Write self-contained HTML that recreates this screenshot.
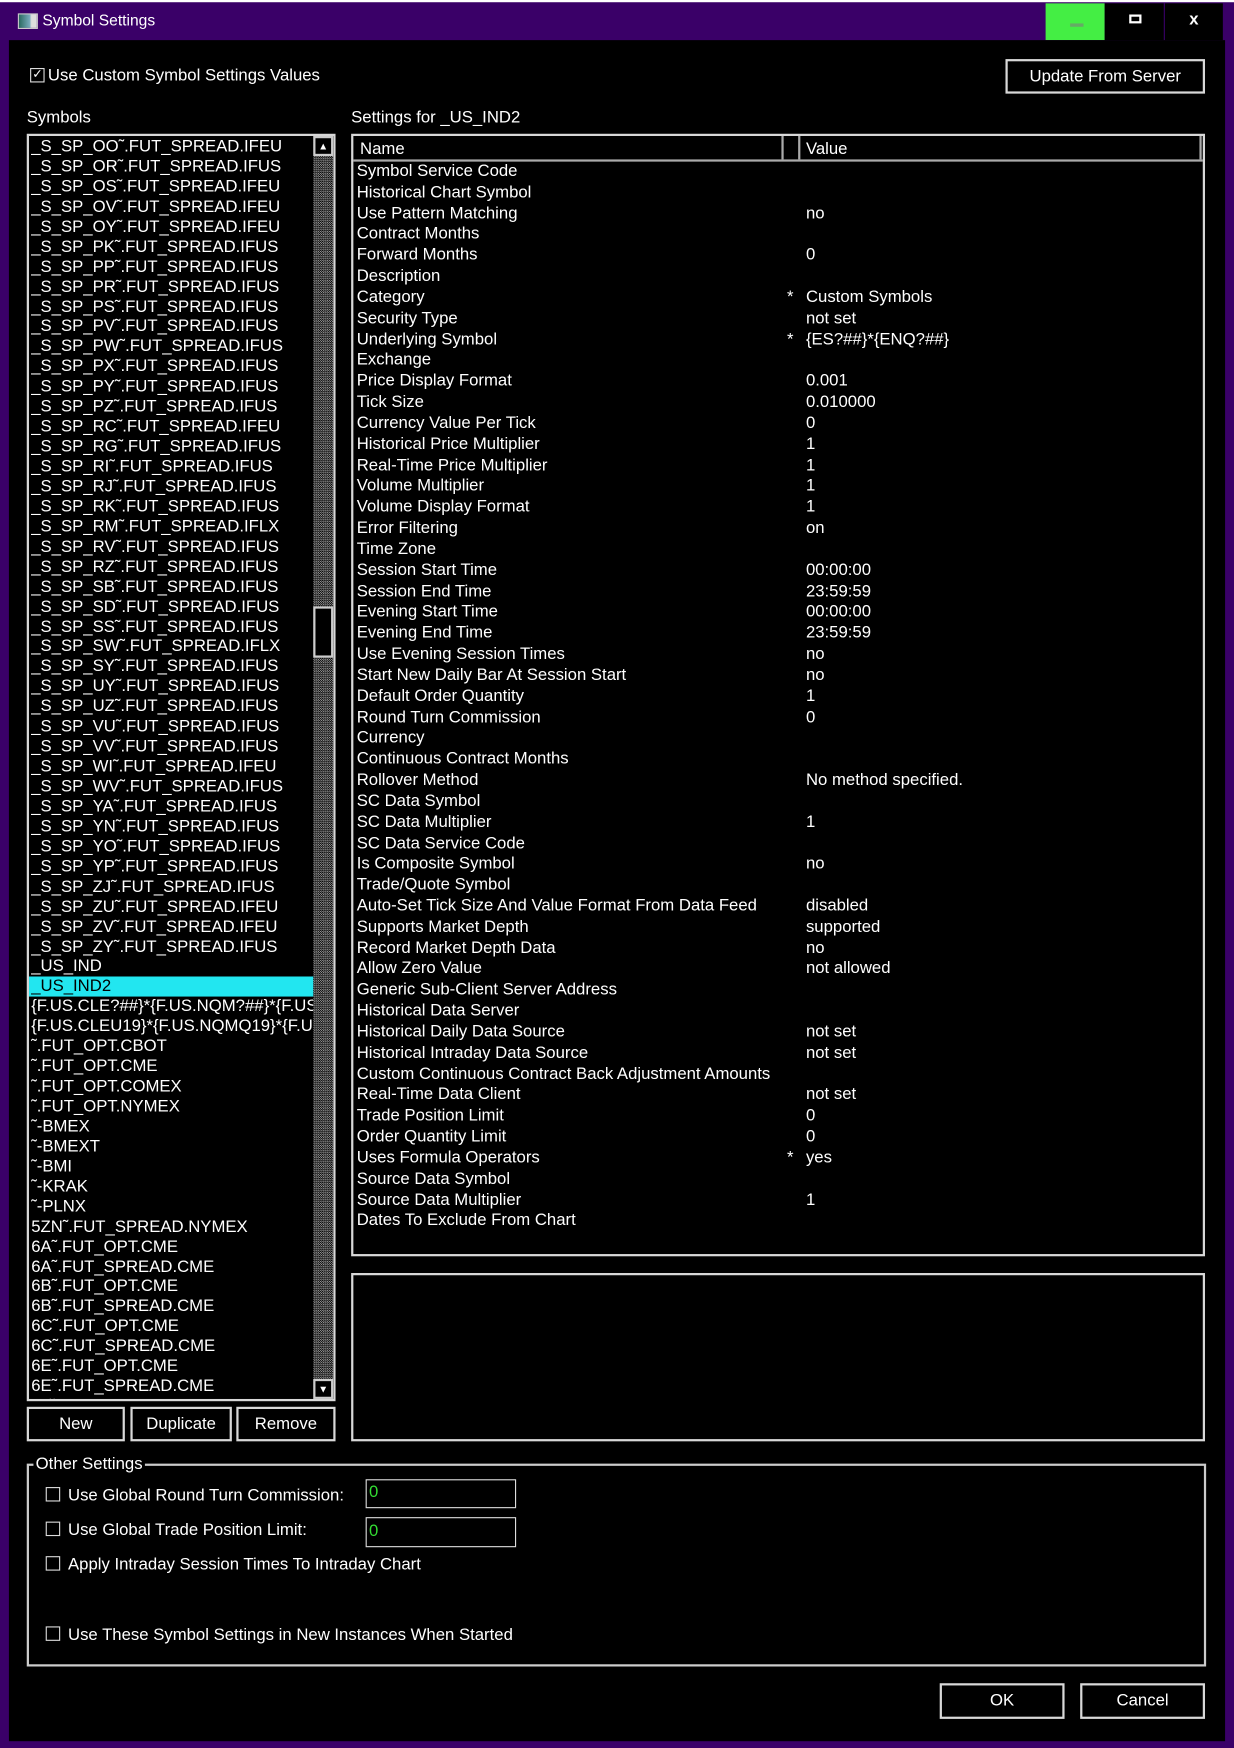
<!DOCTYPE html>
<html><head><meta charset="utf-8"><style>
html,body{margin:0;padding:0;background:#3a0068;overflow:hidden;width:1234px;height:1748px}
#w{position:absolute;left:0;top:0;width:1107px;height:1568px;transform:scale(1.11472);transform-origin:0 0;background:#3a0068;font-family:"Liberation Sans",sans-serif;font-size:15px;color:#fff}
.a{position:absolute}
.box{position:absolute;border:2px solid #d8d8d8;box-sizing:border-box}
.btn{position:absolute;border:2px solid #d8d8d8;box-sizing:border-box;text-align:center;background:#000}
.cb{position:absolute;width:11px;height:11px;border:1px solid #ddd}
.list div{height:17.95px;line-height:17.95px;padding-left:2px;white-space:nowrap}
.tbl div{height:18.84px;line-height:18.84px;white-space:nowrap;position:relative}
.tbl span{position:absolute;left:403px}
.tbl i{position:absolute;left:386px;font-style:normal}
</style></head><body><div id="w">
<div class="a" style="left:0;top:0;width:1107px;height:2px;background:#fff"></div>
<div class="a" style="left:16px;top:12px;width:16px;height:12px;background:linear-gradient(90deg,#2a6a60,#7ab 60%,#ddd 70%);border:1px solid #ccc"></div>
<div class="a" style="left:38px;top:10px;font-size:14px">Symbol Settings</div>
<div class="a" style="left:938px;top:3px;width:53px;height:33px;background:#44ee44"><div class="a" style="left:22px;top:18px;width:12px;height:3px;background:#6a6"></div></div>
<div class="a" style="left:991px;top:3px;width:53px;height:33px;background:#000"><div class="a" style="left:22px;top:10px;width:7px;height:4px;border:2px solid #fff"></div></div>
<div class="a" style="left:1045px;top:3px;width:52px;height:33px;background:#000;text-align:center;line-height:30px;font-weight:bold;font-size:15px">x</div>
<div class="a" style="left:8px;top:36px;width:1091px;height:1526px;background:#000"></div>

<div class="cb" style="left:27px;top:61px;font-size:11px;line-height:11px;text-align:center">✓</div>
<div class="a" style="left:43px;top:59px">Use Custom Symbol Settings Values</div>
<div class="btn" style="left:902px;top:53px;width:179px;height:31px;line-height:27px">Update From Server</div>

<div class="a" style="left:24px;top:97px">Symbols</div>
<div class="box" style="left:24px;top:120px;width:277px;height:1137px;overflow:hidden">
<div class="list" style="position:absolute;left:0;top:1px;width:257px">
<div>_S_SP_OO˜.FUT_SPREAD.IFEU</div><div>_S_SP_OR˜.FUT_SPREAD.IFUS</div><div>_S_SP_OS˜.FUT_SPREAD.IFEU</div><div>_S_SP_OV˜.FUT_SPREAD.IFEU</div><div>_S_SP_OY˜.FUT_SPREAD.IFEU</div><div>_S_SP_PK˜.FUT_SPREAD.IFUS</div><div>_S_SP_PP˜.FUT_SPREAD.IFUS</div><div>_S_SP_PR˜.FUT_SPREAD.IFUS</div><div>_S_SP_PS˜.FUT_SPREAD.IFUS</div><div>_S_SP_PV˜.FUT_SPREAD.IFUS</div><div>_S_SP_PW˜.FUT_SPREAD.IFUS</div><div>_S_SP_PX˜.FUT_SPREAD.IFUS</div><div>_S_SP_PY˜.FUT_SPREAD.IFUS</div><div>_S_SP_PZ˜.FUT_SPREAD.IFUS</div><div>_S_SP_RC˜.FUT_SPREAD.IFEU</div><div>_S_SP_RG˜.FUT_SPREAD.IFUS</div><div>_S_SP_RI˜.FUT_SPREAD.IFUS</div><div>_S_SP_RJ˜.FUT_SPREAD.IFUS</div><div>_S_SP_RK˜.FUT_SPREAD.IFUS</div><div>_S_SP_RM˜.FUT_SPREAD.IFLX</div><div>_S_SP_RV˜.FUT_SPREAD.IFUS</div><div>_S_SP_RZ˜.FUT_SPREAD.IFUS</div><div>_S_SP_SB˜.FUT_SPREAD.IFUS</div><div>_S_SP_SD˜.FUT_SPREAD.IFUS</div><div>_S_SP_SS˜.FUT_SPREAD.IFUS</div><div>_S_SP_SW˜.FUT_SPREAD.IFLX</div><div>_S_SP_SY˜.FUT_SPREAD.IFUS</div><div>_S_SP_UY˜.FUT_SPREAD.IFUS</div><div>_S_SP_UZ˜.FUT_SPREAD.IFUS</div><div>_S_SP_VU˜.FUT_SPREAD.IFUS</div><div>_S_SP_VV˜.FUT_SPREAD.IFUS</div><div>_S_SP_WI˜.FUT_SPREAD.IFEU</div><div>_S_SP_WV˜.FUT_SPREAD.IFUS</div><div>_S_SP_YA˜.FUT_SPREAD.IFUS</div><div>_S_SP_YN˜.FUT_SPREAD.IFUS</div><div>_S_SP_YO˜.FUT_SPREAD.IFUS</div><div>_S_SP_YP˜.FUT_SPREAD.IFUS</div><div>_S_SP_ZJ˜.FUT_SPREAD.IFUS</div><div>_S_SP_ZU˜.FUT_SPREAD.IFEU</div><div>_S_SP_ZV˜.FUT_SPREAD.IFEU</div><div>_S_SP_ZY˜.FUT_SPREAD.IFUS</div><div>_US_IND</div><div style="background:#22e6f0;color:#000">_US_IND2</div><div>{F.US.CLE?##}*{F.US.NQM?##}*{F.US</div><div>{F.US.CLEU19}*{F.US.NQMQ19}*{F.U</div><div>˜.FUT_OPT.CBOT</div><div>˜.FUT_OPT.CME</div><div>˜.FUT_OPT.COMEX</div><div>˜.FUT_OPT.NYMEX</div><div>˜-BMEX</div><div>˜-BMEXT</div><div>˜-BMI</div><div>˜-KRAK</div><div>˜-PLNX</div><div>5ZN˜.FUT_SPREAD.NYMEX</div><div>6A˜.FUT_OPT.CME</div><div>6A˜.FUT_SPREAD.CME</div><div>6B˜.FUT_OPT.CME</div><div>6B˜.FUT_SPREAD.CME</div><div>6C˜.FUT_OPT.CME</div><div>6C˜.FUT_SPREAD.CME</div><div>6E˜.FUT_OPT.CME</div><div>6E˜.FUT_SPREAD.CME</div><div>6J˜.FUT_SPREAD.CME</div>
</div>
<div class="a" style="left:255px;top:0;width:18px;height:1133px;background:repeating-conic-gradient(#999 0 25%,#000 0 50%) 0 0/2px 2px"></div>
<div class="a" style="left:255px;top:0;width:18px;height:18px;background:#000;border:2px solid #ccc;box-sizing:border-box;color:#fff;font-size:9px;text-align:center;line-height:14px">▲</div>
<div class="a" style="left:255px;top:422px;width:18px;height:46px;background:#000;border:2px solid #ccc;box-sizing:border-box"></div>
<div class="a" style="left:255px;top:1115px;width:18px;height:18px;background:#000;border:2px solid #ccc;box-sizing:border-box;color:#fff;font-size:9px;text-align:center;line-height:14px">▼</div>
</div>
<div class="btn" style="left:24px;top:1262px;width:88px;height:31px;line-height:27px">New</div>
<div class="btn" style="left:117px;top:1262px;width:91px;height:31px;line-height:27px">Duplicate</div>
<div class="btn" style="left:212px;top:1262px;width:89px;height:31px;line-height:27px">Remove</div>

<div class="a" style="left:315px;top:97px">Settings for _US_IND2</div>
<div class="box" style="left:315px;top:120px;width:766px;height:1007px">
<div class="a" style="left:0;top:0;width:762px;height:21px;border-bottom:2px solid #aaa"></div>
<div class="a" style="left:384px;top:0;width:2px;height:21px;background:#aaa"></div>
<div class="a" style="left:399px;top:0;width:2px;height:21px;background:#aaa"></div>
<div class="a" style="left:759px;top:0;width:2px;height:21px;background:#aaa"></div>
<div class="a" style="left:6px;top:3px">Name</div>
<div class="a" style="left:406px;top:3px">Value</div>
<div class="tbl" style="position:absolute;left:3px;top:23px;width:755px">
<div>Symbol Service Code</div><div>Historical Chart Symbol</div><div>Use Pattern Matching<span>no</span></div><div>Contract Months</div><div>Forward Months<span>0</span></div><div>Description</div><div>Category<i>*</i><span>Custom Symbols</span></div><div>Security Type<span>not set</span></div><div>Underlying Symbol<i>*</i><span>{ES?##}*{ENQ?##}</span></div><div>Exchange</div><div>Price Display Format<span>0.001</span></div><div>Tick Size<span>0.010000</span></div><div>Currency Value Per Tick<span>0</span></div><div>Historical Price Multiplier<span>1</span></div><div>Real-Time Price Multiplier<span>1</span></div><div>Volume Multiplier<span>1</span></div><div>Volume Display Format<span>1</span></div><div>Error Filtering<span>on</span></div><div>Time Zone</div><div>Session Start Time<span>00:00:00</span></div><div>Session End Time<span>23:59:59</span></div><div>Evening Start Time<span>00:00:00</span></div><div>Evening End Time<span>23:59:59</span></div><div>Use Evening Session Times<span>no</span></div><div>Start New Daily Bar At Session Start<span>no</span></div><div>Default Order Quantity<span>1</span></div><div>Round Turn Commission<span>0</span></div><div>Currency</div><div>Continuous Contract Months</div><div>Rollover Method<span>No method specified.</span></div><div>SC Data Symbol</div><div>SC Data Multiplier<span>1</span></div><div>SC Data Service Code</div><div>Is Composite Symbol<span>no</span></div><div>Trade/Quote Symbol</div><div>Auto-Set Tick Size And Value Format From Data Feed<span>disabled</span></div><div>Supports Market Depth<span>supported</span></div><div>Record Market Depth Data<span>no</span></div><div>Allow Zero Value<span>not allowed</span></div><div>Generic Sub-Client Server Address</div><div>Historical Data Server</div><div>Historical Daily Data Source<span>not set</span></div><div>Historical Intraday Data Source<span>not set</span></div><div>Custom Continuous Contract Back Adjustment Amounts</div><div>Real-Time Data Client<span>not set</span></div><div>Trade Position Limit<span>0</span></div><div>Order Quantity Limit<span>0</span></div><div>Uses Formula Operators<i>*</i><span>yes</span></div><div>Source Data Symbol</div><div>Source Data Multiplier<span>1</span></div><div>Dates To Exclude From Chart</div>
</div></div>
<div class="box" style="left:315px;top:1142px;width:766px;height:151px"></div>

<div class="a" style="left:24px;top:1313px;width:1058px;height:182px;border:2px solid #ccc;box-sizing:border-box"></div>
<div class="a" style="left:30px;top:1305px;background:#000;padding:0 2px">Other Settings</div>
<div class="cb" style="left:41px;top:1334px"></div><div class="a" style="left:61px;top:1333px">Use Global Round Turn Commission:</div>
<div class="a" style="left:328px;top:1327px;width:135px;height:26px;border:1px solid #ddd;box-sizing:border-box;color:#3d3;padding-left:2px;line-height:22px">0</div>
<div class="cb" style="left:41px;top:1365px"></div><div class="a" style="left:61px;top:1364px">Use Global Trade Position Limit:</div>
<div class="a" style="left:328px;top:1361px;width:135px;height:27px;border:1px solid #ddd;box-sizing:border-box;color:#3d3;padding-left:2px;line-height:23px">0</div>
<div class="cb" style="left:41px;top:1396px"></div><div class="a" style="left:61px;top:1395px">Apply Intraday Session Times To Intraday Chart</div>
<div class="cb" style="left:41px;top:1459px"></div><div class="a" style="left:61px;top:1458px">Use These Symbol Settings in New Instances When Started</div>

<div class="btn" style="left:843px;top:1510px;width:112px;height:32px;line-height:28px">OK</div>
<div class="btn" style="left:969px;top:1510px;width:112px;height:32px;line-height:28px">Cancel</div>
</div></body></html>
